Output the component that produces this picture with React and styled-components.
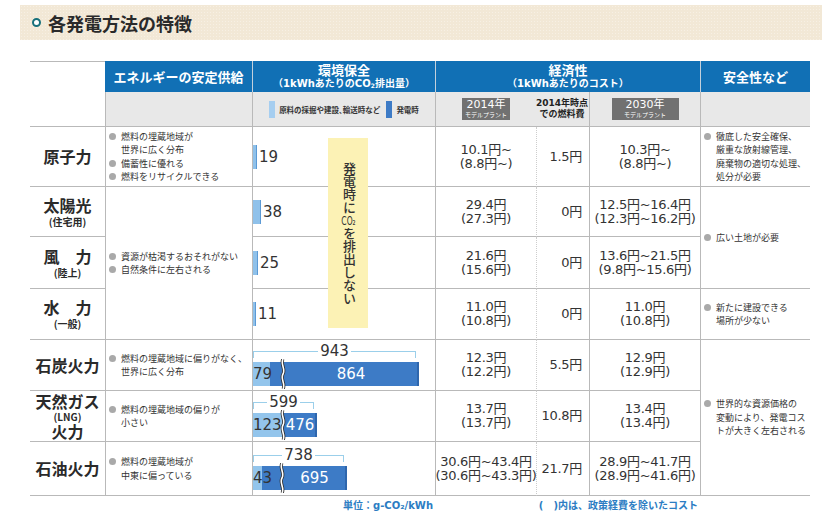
import { Fragment } from "react";
import styled, { createGlobalStyle } from "styled-components";

const GlobalStyle = createGlobalStyle`
  * { box-sizing: border-box; }
  body {
    margin: 0;
    background: #fff;
    color: #333;
    font-family: "DejaVu Sans", "Noto Sans CJK JP", sans-serif;
  }
`;

const line = "#b9b9b9";
const blue = "#1170b5";
const jp = `"Noto Sans CJK JP", sans-serif`;
const num = `"DejaVu Sans", "Noto Sans CJK JP", sans-serif`;

// grid placement shared by every cell
const place = (p) => `grid-column: ${p.$col}; grid-row: ${p.$row};`;

const Page = styled.div`
  padding: 5px 0 0 20px;
`;

const TitleBar = styled.h2`
  margin: 0;
  width: 802px;
  height: 35px;
  display: flex;
  align-items: center;
  gap: 7px;
  padding-left: 12px;
  background-color: #f2e8d6;
  background-image: radial-gradient(rgba(255, 255, 255, 0.35) 0.8px, transparent 0.8px);
  background-size: 3px 3px;
  font-family: ${jp};
  font-size: 18px;
  font-weight: 700;
  color: #2a2a2a;
`;

const Ring = styled.span`
  width: 9px;
  height: 9px;
  border-radius: 50%;
  border: 2.5px solid #17707b;
  background: #fff;
`;

const Table = styled.div`
  display: grid;
  grid-template-columns: 75px 147px 183px 101px 53px 111px 110px;
  grid-template-rows: 31px 35px 60px 50px 52px 51px 51px 51px 54px 22px;
  width: 780px;
  margin: 21px 0 0 10px;
`;

const Corner = styled.div`
  ${place};
  border-top: 1px solid ${line};
  border-bottom: 1px solid ${line};
`;

const HeadCell = styled.div`
  ${place};
  display: flex;
  flex-direction: column;
  align-items: center;
  justify-content: center;
  background: ${blue};
  color: #fff;
  font-family: ${jp};
  font-weight: 700;
  font-size: 13px;
  line-height: 14px;
  border-left: ${(p) => (p.$first ? "none" : "1px solid #c3d0dc")};
`;

const HeadSub = styled.span`
  font-family: ${num};
  font-size: 10px;
  line-height: 13px;
`;

const Sub = styled.sub`
  font-size: 0.6em;
  vertical-align: -1px;
  line-height: 0;
`;

const SubCell = styled.div`
  ${place};
  display: flex;
  align-items: center;
  justify-content: ${(p) => p.$justify || "center"};
  padding-right: ${(p) => p.$pr || 0}px;
  background: #e8e8e8;
  border-bottom: 1px solid ${line};
  border-left: ${(p) => (p.$noDivider ? "none" : `1px solid ${line}`)};
`;

const Legend = styled.div`
  display: flex;
  align-items: center;
  gap: 4px;
  font-family: ${jp};
  font-size: 7.5px;
  font-weight: 700;
  color: #333;
`;

const Swatch = styled.span`
  width: 6px;
  height: 17px;
  background: ${(p) => p.$color};
  margin-left: ${(p) => p.$gap || 0}px;
`;

const ModelBox = styled.div`
  width: ${(p) => p.$w}px;
  height: 22px;
  display: flex;
  flex-direction: column;
  align-items: center;
  justify-content: center;
  background: #717171;
  color: #fff;
`;

const ModelYear = styled.span`
  font-family: ${num};
  font-size: 11px;
  line-height: 12px;
`;

const ModelCaption = styled.span`
  font-family: ${jp};
  font-size: 6px;
  line-height: 8px;
`;

const FuelHead = styled.div`
  font-family: ${num};
  font-size: 9px;
  font-weight: 700;
  line-height: 11px;
  text-align: center;
  white-space: nowrap;
  color: #222;
`;

const NameCell = styled.div`
  ${place};
  display: flex;
  flex-direction: column;
  align-items: center;
  justify-content: center;
  border-bottom: 1px solid ${line};
  font-family: ${jp};
  font-weight: 700;
  color: #2a2a2a;
`;

const Name = styled.span`
  font-size: 16px;
  line-height: ${(p) => (p.$tight ? 17 : 19)}px;
`;

const NameSub = styled.span`
  font-size: 10px;
  line-height: 13px;
`;

const NoteCell = styled.div`
  ${place};
  display: flex;
  flex-direction: column;
  justify-content: center;
  padding-left: 3px;
  border-left: 1px solid ${line};
  border-bottom: 1px solid ${line};
  font-family: ${jp};
  font-size: 9px;
  line-height: 13.5px;
  color: #333;
`;

const NoteItem = styled.div`
  display: flex;
  gap: 5px;
`;

const Dot = styled.span`
  flex: none;
  width: 7px;
  height: 7px;
  margin-top: 3px;
  border-radius: 50%;
  background: #a9a9a9;
`;

const BarCell = styled.div`
  ${place};
  display: flex;
  align-items: center;
  gap: 2px;
  border-left: 1px solid ${line};
  border-bottom: 1px solid ${line};
`;

const SmallBar = styled.span`
  width: ${(p) => p.$w}px;
  height: 24px;
  background: #8fc1ea;
  border-right: 1px solid #5c9ad5;
`;

const BarNum = styled.span`
  font-family: ${num};
  font-size: 15px;
  line-height: 24px;
  color: #333;
  white-space: nowrap;
`;

const BarStack = styled.div`
  display: flex;
  flex-direction: column;
  gap: 4px;
  width: ${(p) => p.$w}px;
`;

const Bracket = styled.div`
  display: flex;
  height: 14px;
  width: calc(100% - 3px);
`;

const Arm = styled.span`
  flex: 1;
  align-self: flex-end;
  height: 7px;
  border-top: 1px solid #9bcfea;
  border-${(p) => p.$side}: 1px solid #9bcfea;
`;

const BracketNum = styled.span`
  padding: 0 2px;
  font-family: ${num};
  font-size: 15px;
  line-height: 14px;
  color: #333;
`;

const Bar = styled.div`
  position: relative;
  display: flex;
  height: 24px;
  background: linear-gradient(to right, #93c5ec 0 ${(p) => p.$light}px, #3d7bc6 ${(p) => p.$light}px);
  box-shadow: inset -2px 0 0 #2e66ad;
`;

const LowNum = styled(BarNum)`
  flex: none;
  width: ${(p) => p.$w}px;
`;

const HighNum = styled(BarNum)`
  flex: 1;
  text-align: center;
  color: #fff;
`;

const BreakMark = styled.svg`
  position: absolute;
  top: -3px;
  left: ${(p) => p.$x - 4}px;
`;

const NoEmission = styled.div`
  grid-column: 3;
  grid-row: 3 / 7;
  align-self: start;
  justify-self: start;
  z-index: 1;
  width: 40px;
  height: 190px;
  margin: 11px 0 0 76px;
  display: flex;
  align-items: center;
  justify-content: center;
  background: #fcf2b5;
`;

const VerticalText = styled.span`
  writing-mode: vertical-rl;
  font-family: ${num};
  font-size: 13px;
  line-height: 14px;
  font-weight: 500;
  color: #333;
`;

const Tcy = styled.span`
  text-combine-upright: all;
`;

const CostCell = styled.div`
  ${place};
  display: flex;
  align-items: center;
  justify-content: ${(p) => (p.$right ? "flex-end" : "center")};
  padding-right: ${(p) => (p.$right ? 7 : 0)}px;
  border-left: 1px ${(p) => (p.$dotted ? "dotted #cdcdcd" : `solid ${line}`)};
  border-bottom: 1px solid ${line};
  font-family: ${num};
  font-size: 13px;
  line-height: 14px;
  letter-spacing: -0.3px;
  color: #333;
  white-space: nowrap;
`;

const CostText = styled.div`
  text-align: center;
`;

const FootNote = styled.div`
  ${place};
  display: flex;
  justify-content: flex-end;
  align-items: flex-start;
  padding: 4px 2px 0 0;
  font-family: ${num};
  font-size: 10px;
  font-weight: 700;
  line-height: 12px;
  color: #2c7dc3;
`;

const Lines = ({ lines }) =>
  lines.map((t, i) => (
    <Fragment key={i}>
      {i > 0 && <br />}
      {t}
    </Fragment>
  ));

const Notes = ({ col, row, items }) => (
  <NoteCell $col={col} $row={row}>
    {items.map((lines, i) => (
      <NoteItem key={i}>
        <Dot />
        <div>
          <Lines lines={lines} />
        </div>
      </NoteItem>
    ))}
  </NoteCell>
);

const BigBar = ({ total, width, light, brk, low, high }) => (
  <BarStack $w={width}>
    <Bracket>
      <Arm $side="left" />
      <BracketNum>{total}</BracketNum>
      <Arm $side="right" />
    </Bracket>
    <Bar $light={light}>
      <LowNum $w={brk}>{low}</LowNum>
      <HighNum>{high}</HighNum>
      <BreakMark $x={brk} width="8" height="30" viewBox="0 0 8 30">
        <path d="M4 0 C1 5 7 10 4 15 C1 20 7 25 4 30" fill="none" stroke="#2b2b2b" strokeWidth="3.2" />
        <path d="M4 0 C1 5 7 10 4 15 C1 20 7 25 4 30" fill="none" stroke="#fff" strokeWidth="1.6" />
      </BreakMark>
    </Bar>
  </BarStack>
);

const rows = [
  { name: "原子力", small: [4, 19], cost: ["10.1円~", "(8.8円~)"], fuel: "1.5円", cost30: ["10.3円~", "(8.8円~)"] },
  { name: "太陽光", sub: "(住宅用)", small: [8, 38], cost: ["29.4円", "(27.3円)"], fuel: "0円", cost30: ["12.5円~16.4円", "(12.3円~16.2円)"] },
  { name: "風　力", sub: "(陸上)", small: [5, 25], cost: ["21.6円", "(15.6円)"], fuel: "0円", cost30: ["13.6円~21.5円", "(9.8円~15.6円)"] },
  { name: "水　力", sub: "(一般)", small: [3, 11], cost: ["11.0円", "(10.8円)"], fuel: "0円", cost30: ["11.0円", "(10.8円)"] },
  {
    name: "石炭火力",
    big: { total: 943, width: 166, light: 17, brk: 30, low: 79, high: 864 },
    cost: ["12.3円", "(12.2円)"], fuel: "5.5円", cost30: ["12.9円", "(12.9円)"],
  },
  {
    name: "天然ガス", sub: "(LNG)", after: "火力",
    big: { total: 599, width: 64, light: 30, brk: 30, low: 123, high: 476 },
    cost: ["13.7円", "(13.7円)"], fuel: "10.8円", cost30: ["13.4円", "(13.4円)"],
  },
  {
    name: "石油火力",
    big: { total: 738, width: 94, light: 9, brk: 29, low: 43, high: 695 },
    cost: ["30.6円~43.4円", "(30.6円~43.3円)"], fuel: "21.7円", cost30: ["28.9円~41.7円", "(28.9円~41.6円)"],
  },
];

const supplyNotes = [
  { row: "3", items: [["燃料の埋蔵地域が", "世界に広く分布"], ["備蓄性に優れる"], ["燃料をリサイクルできる"]] },
  { row: "4 / 7", items: [["資源が枯渇するおそれがない"], ["自然条件に左右される"]] },
  { row: "7", items: [["燃料の埋蔵地域に偏りがなく、", "世界に広く分布"]] },
  { row: "8", items: [["燃料の埋蔵地域の偏りが", "小さい"]] },
  { row: "9", items: [["燃料の埋蔵地域が", "中東に偏っている"]] },
];

const safetyNotes = [
  { row: "3", items: [["徹底した安全確保、", "厳重な放射線管理、", "廃棄物の適切な処理、", "処分が必要"]] },
  { row: "4 / 6", items: [["広い土地が必要"]] },
  { row: "6", items: [["新たに建設できる", "場所が少ない"]] },
  { row: "7 / 10", items: [["世界的な資源価格の", "変動により、発電コス", "トが大きく左右される"]] },
];

export default function App() {
  return (
    <Page>
      <GlobalStyle />
      <TitleBar>
        <Ring />
        各発電方法の特徴
      </TitleBar>

      <Table>
        <Corner $col="1" $row="1 / 3" />
        <HeadCell $col="2" $row="1" $first>エネルギーの安定供給</HeadCell>
        <HeadCell $col="3" $row="1">
          環境保全
          <HeadSub>（1kWhあたりのCO<Sub>2</Sub>排出量）</HeadSub>
        </HeadCell>
        <HeadCell $col="4 / 7" $row="1">
          経済性
          <HeadSub>（1kWhあたりのコスト）</HeadSub>
        </HeadCell>
        <HeadCell $col="7" $row="1">安全性など</HeadCell>

        <SubCell $col="2" $row="2" />
        <SubCell $col="3" $row="2">
          <Legend>
            <Swatch $color="#a6cef0" />
            原料の採掘や建設､輸送時など
            <Swatch $color="#3d7bc6" $gap={2} />
            発電時
          </Legend>
        </SubCell>
        <SubCell $col="4" $row="2">
          <ModelBox $w={48}>
            <ModelYear>2014年</ModelYear>
            <ModelCaption>モデルプラント</ModelCaption>
          </ModelBox>
        </SubCell>
        <SubCell $col="5" $row="2" $noDivider $justify="flex-end" $pr={1}>
          <FuelHead>
            2014年時点
            <br />
            での燃料費
          </FuelHead>
        </SubCell>
        <SubCell $col="6" $row="2">
          <ModelBox $w={67}>
            <ModelYear>2030年</ModelYear>
            <ModelCaption>モデルプラント</ModelCaption>
          </ModelBox>
        </SubCell>
        <SubCell $col="7" $row="2" />

        {rows.map((r, i) => {
          const row = String(i + 3);
          return [
            <NameCell key={`n${i}`} $col="1" $row={row}>
              <Name $tight={!!r.after}>{r.name}</Name>
              {r.sub && <NameSub>{r.sub}</NameSub>}
              {r.after && <Name $tight>{r.after}</Name>}
            </NameCell>,
            <BarCell key={`b${i}`} $col="3" $row={row}>
              {r.small ? (
                <>
                  <SmallBar $w={r.small[0]} />
                  <BarNum>{r.small[1]}</BarNum>
                </>
              ) : (
                <BigBar {...r.big} />
              )}
            </BarCell>,
            <CostCell key={`c${i}`} $col="4" $row={row}>
              <CostText>
                <Lines lines={r.cost} />
              </CostText>
            </CostCell>,
            <CostCell key={`f${i}`} $col="5" $row={row} $dotted $right>
              {r.fuel}
            </CostCell>,
            <CostCell key={`d${i}`} $col="6" $row={row}>
              <CostText>
                <Lines lines={r.cost30} />
              </CostText>
            </CostCell>,
          ];
        })}

        {supplyNotes.map((n) => (
          <Notes key={n.row} col="2" row={n.row} items={n.items} />
        ))}
        {safetyNotes.map((n) => (
          <Notes key={n.row} col="7" row={n.row} items={n.items} />
        ))}

        <NoEmission>
          <VerticalText>
            発電時に<Tcy>CO₂</Tcy>を排出しない
          </VerticalText>
        </NoEmission>

        <FootNote $col="1 / 4" $row="10">単位：g-CO₂/kWh</FootNote>
        <FootNote $col="4 / 7" $row="10">(　)内は、政策経費を除いたコスト</FootNote>
      </Table>
    </Page>
  );
}
